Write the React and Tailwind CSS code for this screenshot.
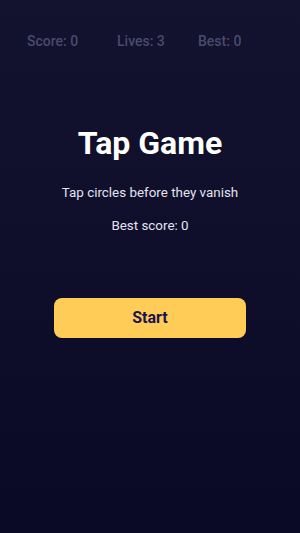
import React from 'react';

export default function App() {
  return (
    <div
      className="flex h-[533px] w-[300px] flex-col bg-gradient-to-b from-[#13122f] to-[#0a0926]"
      style={{ fontFamily: 'Roboto, "Noto Sans", sans-serif' }}
    >
      {/* Stats */}
      <div className="flex pt-[31px] pl-[27px] text-[14px] font-medium leading-[20px] text-[#4a4a6b]">
        <span className="w-[90px]">Score: 0</span>
        <span className="w-[81px]">Lives: 3</span>
        <span>Best: 0</span>
      </div>

      {/* Menu */}
      <div className="flex flex-col items-center pt-[72px]">
        <h1 className="text-[32px] font-bold leading-[40px] text-white">Tap Game</h1>
        <p className="mt-[20px] text-[13.4px] leading-[20px] text-[#e3e3ef]">Tap circles before they vanish</p>
        <p className="mt-[13px] text-[13.4px] leading-[20px] text-[#e3e3ef]">Best score: 0</p>
        <button className="mt-[62px] h-[40px] w-[192px] rounded-lg bg-[#ffcd57] text-[16px] font-bold text-[#1c1250]">
          Start
        </button>
      </div>
    </div>
  );
}
